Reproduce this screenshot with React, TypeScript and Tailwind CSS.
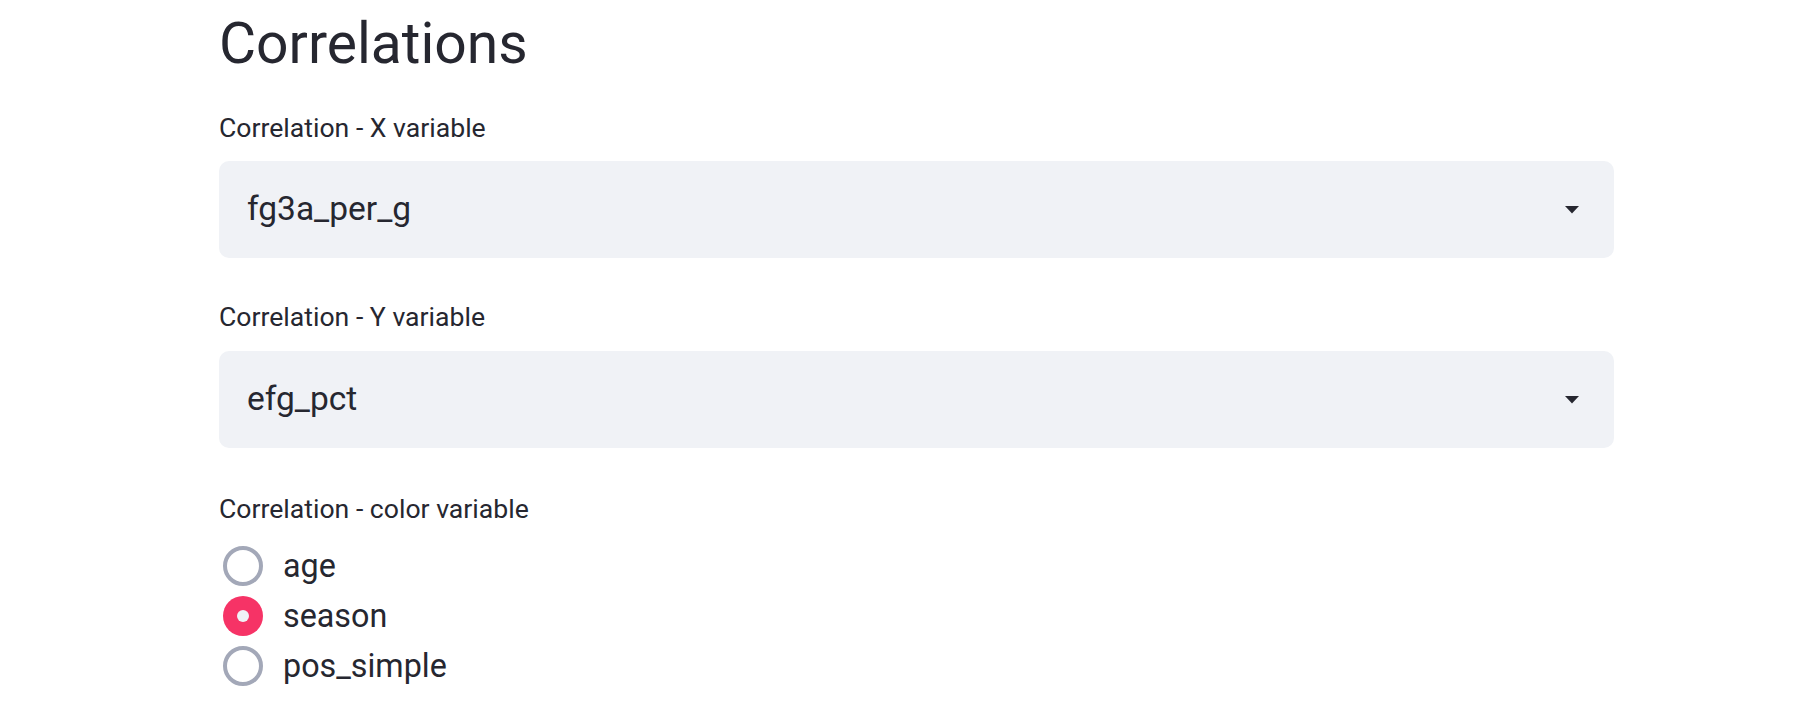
import React from "react";

function Select({ value }: { value: string }) {
  return (
    <div className="flex h-[97px] w-[1395px] items-center justify-between rounded-[10px] bg-[#f0f2f6] pl-[28px] pr-[35px]">
      <span className="text-[33.5px] text-[#262730]">{value}</span>
      <svg width="14" height="8" viewBox="0 0 14 8">
        <path d="M0 0 L14 0 L7 7.5 Z" fill="#262730" />
      </svg>
    </div>
  );
}

function Radio({ label, checked }: { label: string; checked?: boolean }) {
  return (
    <div className="flex h-[50px] items-center pl-[4px]">
      {checked ? (
        <div className="flex h-[40px] w-[40px] items-center justify-center rounded-full bg-[#f63366]">
          <div className="h-[12px] w-[12px] rounded-full bg-[#f0f2f6]" />
        </div>
      ) : (
        <div className="h-[40px] w-[40px] rounded-full border-[4px] border-[#a3a8b8] bg-white" />
      )}
      <span className="ml-[20px] text-[32.3px] text-[#262730]">{label}</span>
    </div>
  );
}

export default function App() {
  return (
    <div
      className="h-[702px] w-[1820px] overflow-hidden bg-white pl-[219px] text-[#262730]"
      style={{ fontFamily: 'Roboto, "Open Sans", sans-serif' }}
    >
      <div className="pt-[8px]">
        <h2 className="h-[72px] text-[57px] leading-[72px] font-normal">Correlations</h2>
      </div>
      <div className="mt-[32px] text-[26.6px] leading-[32px]">Correlation - X variable</div>
      <div className="mt-[17px]">
        <Select value="fg3a_per_g" />
      </div>
      <div className="mt-[43px] text-[26.6px] leading-[32px]">Correlation - Y variable</div>
      <div className="mt-[18px]">
        <Select value="efg_pct" />
      </div>
      <div className="mt-[45px] text-[26.6px] leading-[32px]">Correlation - color variable</div>
      <div className="mt-[16px] flex flex-col">
        <Radio label="age" />
        <Radio label="season" checked />
        <Radio label="pos_simple" />
      </div>
    </div>
  );
}
